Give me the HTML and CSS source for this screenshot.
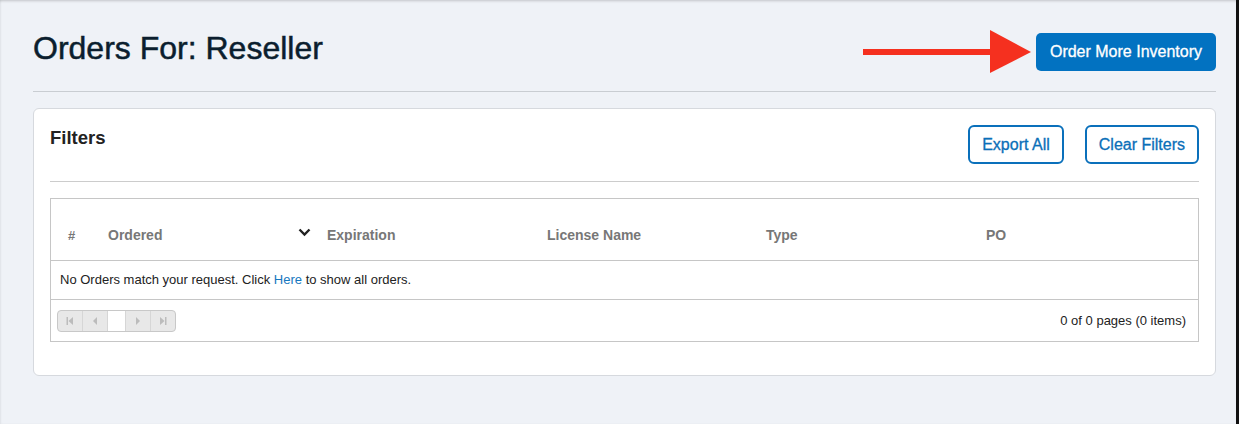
FILE: index.html
```html
<!DOCTYPE html>
<html lang="en">
<head>
    <meta charset="UTF-8">
    <meta name="viewport" content="width=device-width, initial-scale=1.0">
    <title>Orders For: Reseller</title>
    <link rel="stylesheet" href="styles.css">
</head>
<body>
    <div class="page">
        <div class="page-header">
            <h1 class="page-title">Orders For: Reseller</h1>
            <div class="header-actions">
                <!-- annotation arrow -->
                <svg class="callout-arrow" width="170" height="44" viewBox="0 0 170 44">
                    <rect x="0" y="19" width="130" height="6" fill="#f5301f"/>
                    <polygon points="127,0 168,22 127,43" fill="#f5301f"/>
                </svg>
                <button class="btn-primary">Order More Inventory</button>
            </div>
        </div>

        <div class="divider"></div>

        <div class="card">
            <div class="card-header">
                <div class="card-title">Filters</div>
                <div class="card-actions">
                    <button class="btn-outline">Export All</button>
                    <button class="btn-outline">Clear Filters</button>
                </div>
            </div>

            <div class="card-divider"></div>

            <div class="grid">
                <div class="grid-head">
                    <div class="col col-num">#</div>
                    <div class="col col-ordered">
                        <span>Ordered</span>
                        <svg class="sort-icon" width="13" height="9" viewBox="0 0 13 9">
                            <polyline points="1.5,1.5 6.5,6.5 11.5,1.5" fill="none" stroke="#222" stroke-width="2.4"/>
                        </svg>
                    </div>
                    <div class="col">Expiration</div>
                    <div class="col">License Name</div>
                    <div class="col">Type</div>
                    <div class="col">PO</div>
                </div>
                <div class="grid-empty">
                    No Orders match your request. Click <a href="#">Here</a> to show all orders.
                </div>
                <div class="grid-pager">
                    <div class="pager">
                        <span class="pager-btn">
                            <svg width="8" height="8" viewBox="0 0 8 8"><rect x="0.5" y="0" width="1.5" height="8" fill="#bcbcbc"/><polygon points="7,0 2.5,4 7,8" fill="#bcbcbc"/></svg>
                        </span>
                        <span class="pager-btn">
                            <svg width="8" height="8" viewBox="0 0 8 8"><polygon points="6,0 2,4 6,8" fill="#bcbcbc"/></svg>
                        </span>
                        <span class="pager-input"></span>
                        <span class="pager-btn">
                            <svg width="8" height="8" viewBox="0 0 8 8"><polygon points="2,0 6,4 2,8" fill="#bcbcbc"/></svg>
                        </span>
                        <span class="pager-btn">
                            <svg width="8" height="8" viewBox="0 0 8 8"><polygon points="1,0 5.5,4 1,8" fill="#bcbcbc"/><rect x="6" y="0" width="1.5" height="8" fill="#bcbcbc"/></svg>
                        </span>
                    </div>
                    <div class="pager-info">0 of 0 pages (0 items)</div>
                </div>
            </div>
        </div>
    </div>
</body>
</html>
```

FILE: styles.css
```css
html,
body {
    margin: 0;
    height: 100%;
}

body {
    font-family: "Liberation Sans", Arial, sans-serif;
    background-color: #111;
}

.page {
    box-sizing: border-box;
    height: 100%;
    margin-right: 3px;
    padding: 33px 20px 0 33px;
    background-color: #eff2f7;
    box-shadow: inset 0 3px 3px -2px rgba(0,0,0,0.18), inset 1px 0 2px rgba(0,0,0,0.06);
}

.page-header {
    display: flex;
    justify-content: space-between;
    align-items: center;
    height: 38px;
}

.page-title {
    margin: 0;
    font-size: 32px;
    font-weight: normal;
    color: #0b1e2e;
    -webkit-text-stroke: 0.5px #0b1e2e;
    line-height: 1;
    position: relative;
    top: -4px;
}

.header-actions {
    display: flex;
    align-items: center;
    gap: 3px;
}

.callout-arrow {
    display: block;
}

.btn-primary {
    height: 38px;
    padding: 0 14px;
    border: none;
    border-radius: 5px;
    background-color: #0272c1;
    color: #fff;
    font-family: inherit;
    font-size: 16px;
    -webkit-text-stroke: 0.3px #fff;
    cursor: pointer;
}

.divider {
    height: 1px;
    margin-top: 20px;
    background-color: #c9cdd2;
}

.card {
    margin-top: 16px;
    padding: 16px 16px 33px;
    background: white;
    border: 1px solid #d6d9de;
    border-radius: 6px;
}

.card-header {
    display: flex;
    justify-content: space-between;
    align-items: flex-start;
}

.card-title {
    padding-top: 2px;
    font-size: 18.5px;
    font-weight: bold;
    color: #222;
}

.card-actions {
    display: flex;
    gap: 21px;
}

.btn-outline {
    height: 39px;
    padding: 0 12px;
    border: 2px solid #0a70bb;
    border-radius: 6px;
    background: white;
    color: #0a6fb8;
    font-family: inherit;
    font-size: 16px;
    -webkit-text-stroke: 0.3px #0a6fb8;
    cursor: pointer;
}

.card-divider {
    height: 1px;
    margin: 17px 0 16px;
    background-color: #cccccc;
}

.grid {
    border: 1px solid #c6c6c6;
    font-size: 13px;
    color: #222;
}

.grid-head {
    display: grid;
    grid-template-columns: 47px 219px 220px 219px 220px 1fr;
    height: 62px;
    align-items: end;
    padding-bottom: 17px;
    box-sizing: border-box;
    border-bottom: 1px solid #c6c6c6;
}

.col {
    padding-left: 10px;
    font-size: 14px;
    font-weight: bold;
    color: #777;
}

.col-num {
    padding-left: 17px;
    font-size: 13px;
}

.col-ordered {
    display: flex;
    justify-content: space-between;
    align-items: center;
    padding-right: 6px;
}

.sort-icon {
    position: relative;
    top: -3px;
}

.grid-empty {
    height: 38px;
    line-height: 38px;
    padding-left: 9px;
    border-bottom: 1px solid #c6c6c6;
}

.grid-empty a {
    color: #1677c0;
    text-decoration: none;
}

.grid-pager {
    display: flex;
    justify-content: space-between;
    align-items: center;
    height: 41px;
    padding: 0 12px 0 6px;
}

.pager {
    display: flex;
    height: 20px;
    border: 1px solid #c8c8c8;
    border-radius: 4px;
    overflow: hidden;
    background-color: #e8e8e8;
}

.pager-btn {
    display: flex;
    align-items: center;
    justify-content: center;
    width: 24px;
    border-right: 1px solid #d6d6d6;
}

.pager-btn:last-child {
    border-right: none;
}

.pager-input {
    width: 17px;
    background: white;
    border-right: 1px solid #d6d6d6;
}

.pager-info {
    color: #222;
}
```
